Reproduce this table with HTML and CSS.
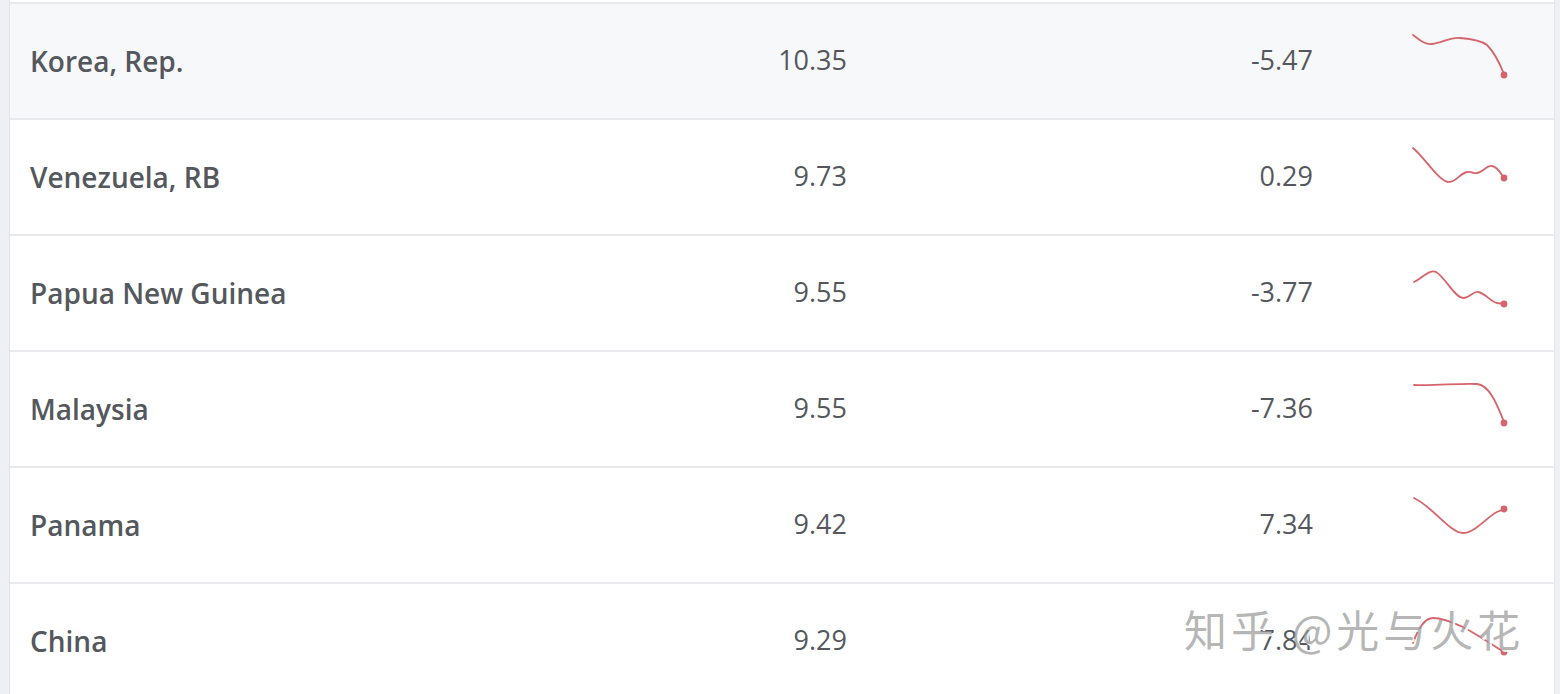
FILE: index.html
```html
<!DOCTYPE html>
<html lang="en">
<head>
<meta charset="utf-8">
<title>Table</title>
<link rel="stylesheet" href="styles.css">
</head>
<body>
<div class="table">
  <div class="row hover">
    <div class="cell name">Korea, Rep.</div>
    <div class="cell num">10.35</div>
    <div class="cell num change">-5.47</div>
    <div class="cell spark">
      <svg viewBox="0 0 100 114" width="100" height="114"><path d="M3 31 C10 36 15 41 22 40 C32 39 40 33 50 34 C62 35 72 37 77 41 C84 48 90 60 94 70"/><circle cx="94" cy="71" r="3.4"/></svg>
    </div>
  </div>
  <div class="row">
    <div class="cell name">Venezuela, RB</div>
    <div class="cell num">9.73</div>
    <div class="cell num change">0.29</div>
    <div class="cell spark">
      <svg viewBox="0 0 100 114" width="100" height="114"><path d="M3 28 C15 38 28 60 38 62 C46 63 50 53 57 52 C62 51 63 54 67 53 C73 52 77 45 82 46 C88 47 91 54 94 58"/><circle cx="94" cy="58" r="3.4"/></svg>
    </div>
  </div>
  <div class="row">
    <div class="cell name">Papua New Guinea</div>
    <div class="cell num">9.55</div>
    <div class="cell num change">-3.77</div>
    <div class="cell spark">
      <svg viewBox="0 0 100 114" width="100" height="114"><path d="M4 46 C12 42 20 33 26 36 C35 41 45 62 53 62 C60 62 63 55 68 56 C75 57 81 66 87 67 L94 68"/><circle cx="94" cy="68" r="3.4"/></svg>
    </div>
  </div>
  <div class="row">
    <div class="cell name">Malaysia</div>
    <div class="cell num">9.55</div>
    <div class="cell num change">-7.36</div>
    <div class="cell spark">
      <svg viewBox="0 0 100 114" width="100" height="114"><path d="M4 33 C25 34 50 31 67 32 C80 33 88 55 94 70"/><circle cx="94" cy="71" r="3.4"/></svg>
    </div>
  </div>
  <div class="row">
    <div class="cell name">Panama</div>
    <div class="cell num">9.42</div>
    <div class="cell num change">7.34</div>
    <div class="cell spark">
      <svg viewBox="0 0 100 114" width="100" height="114"><path d="M4 30 C22 38 40 65 53 65 C65 65 78 48 87 44 L94 41"/><circle cx="94" cy="41" r="3.4"/></svg>
    </div>
  </div>
  <div class="row">
    <div class="cell name">China</div>
    <div class="cell num">9.29</div>
    <div class="cell num change">7.84</div>
    <div class="cell spark">
      <svg viewBox="0 0 100 114" width="100" height="114"><path d="M3 59 C8 45 14 34 23 34 C32 34 42 38 53 43 C70 52 85 63 94 68"/><circle cx="94" cy="68" r="3.4"/></svg>
    </div>
  </div>
</div>
<div class="watermark">知乎 @光与火花</div>
</body>
</html>
```
FILE: styles.css
```css
html, body {
  margin: 0;
  padding: 0;
}
body {
  background: #eef0f3;
  font-family: "Open Sans", "Noto Sans", sans-serif;
  color: #54585d;
  overflow: hidden;
  height: 694px;
  position: relative;
}
.table {
  margin-left: 9px;
  width: 1544px;
  background: #ffffff;
  border-left: 1px solid #e2e4e8;
  border-right: 1px solid #e2e4e8;
  padding-top: 2px;
}
.row {
  display: grid;
  grid-template-columns: 500px 358px 466px 1fr;
  height: 114px;
  border-top: 2px solid #e8eaed;
  align-items: center;
}
.row.hover {
  background: #f7f8fa;
}
.cell {
  padding: 0 21px 0 20px;
}
.name {
  font-size: 28px;
  font-weight: 600;
}
.num {
  font-size: 27px;
  text-align: right;
  padding-right: 21px;
  margin-top: -3px;
}
.spark {
  padding: 0 0 0 76px;
  align-self: stretch;
}
.spark svg {
  display: block;
}
.spark path {
  fill: none;
  stroke: #d5656b;
  stroke-width: 1.8;
  stroke-linecap: round;
}
.spark circle {
  fill: #d5656b;
}
.watermark {
  position: absolute;
  left: 1184px;
  top: 597px;
  font-family: "Noto Sans CJK SC", sans-serif;
  font-size: 43px;
  color: rgba(150, 150, 150, 0.7);
  text-shadow: 2px 2px 0 rgba(255, 255, 255, 0.9);
  letter-spacing: 4px;
  white-space: nowrap;
}
```
